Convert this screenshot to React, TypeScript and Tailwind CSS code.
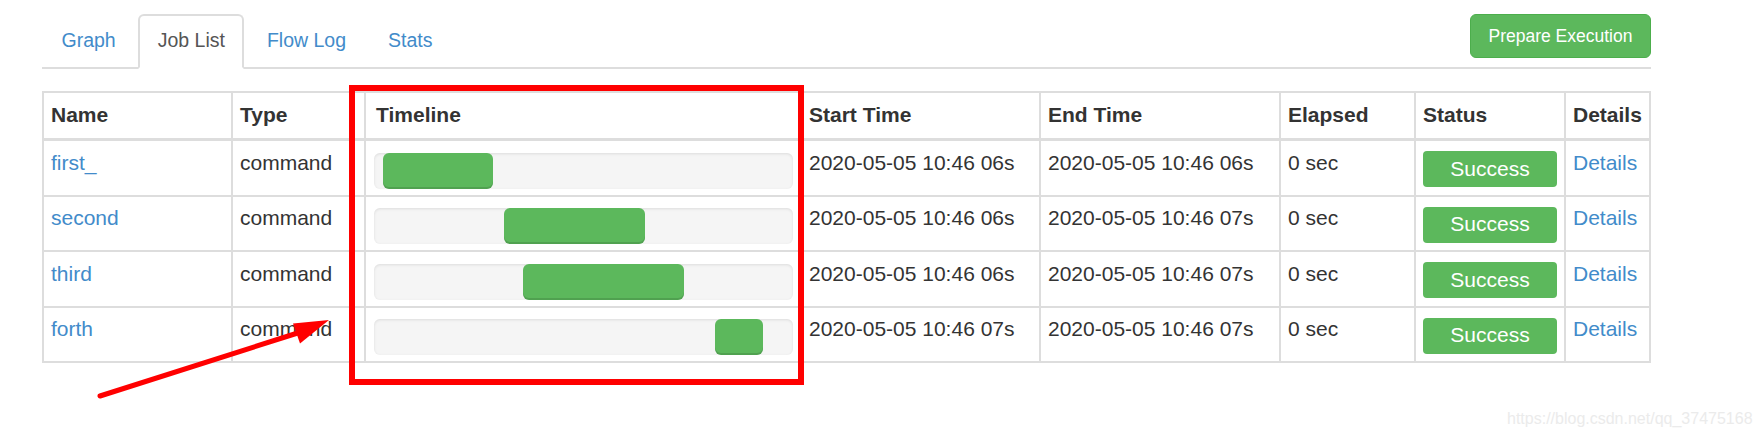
import React from "react";

type Job = {
  name: string;
  start: string;
  end: string;
  bar: string;
};

const jobs: Job[] = [
  { name: "first_", start: "2020-05-05 10:46 06s", end: "2020-05-05 10:46 06s", bar: "ml-[9px] w-[110px]" },
  { name: "second", start: "2020-05-05 10:46 06s", end: "2020-05-05 10:46 07s", bar: "ml-[130px] w-[141px]" },
  { name: "third", start: "2020-05-05 10:46 06s", end: "2020-05-05 10:46 07s", bar: "ml-[149px] w-[161px]" },
  { name: "forth", start: "2020-05-05 10:46 07s", end: "2020-05-05 10:46 07s", bar: "ml-[341px] w-[48px]" },
];

const tabs = ["Graph", "Job List", "Flow Log", "Stats"];
const headers = ["Name", "Type", "Timeline", "Start Time", "End Time", "Elapsed", "Status", "Details"];

const cell = "border-r-2 border-b-2 border-[#ddd] pl-[7px] pr-[7.5px] pt-[6.5px] leading-[30px]";

const App: React.FC = () => {
  return (
    <div className="relative w-[1759px] h-[439px] bg-white text-[#333] font-['Liberation_Sans',Arial,sans-serif] overflow-hidden">
      <div className="pl-[42px] pt-[14px] w-[1651px]">
        {/* tabs + action */}
        <div className="flex justify-between border-b-2 border-[#ddd]">
          <ul className="flex -mb-[2px]">
            {tabs.map((t) => {
              const active = t === "Job List";
              return (
                <li key={t} className="mr-[3px]">
                  <a
                    className={
                      active
                        ? "block h-[55px] px-[17.5px] pt-[10px] text-[19.5px] leading-[28px] border-2 border-[#ddd] border-b-white bg-white rounded-t-[6px] text-[#555]"
                        : "block h-[55px] px-[17.5px] pt-[10px] text-[19.5px] leading-[28px] border-2 border-transparent rounded-t-[6px] text-[#428bca]"
                    }
                  >
                    {t}
                  </a>
                </li>
              );
            })}
          </ul>
          <button className="self-start h-[44px] w-[181px] rounded-[6px] border border-[#4cae4c] bg-[#5cb85c] text-white text-[17.5px]">
            Prepare Execution
          </button>
        </div>

        {/* job table */}
        <div className="mt-[22px] grid w-[1609px] grid-cols-[189px_133px_436px_239px_240px_135px_150px_85px] border-l-2 border-t-2 border-[#ddd] text-[21px]">
          {headers.map((h) => (
            <div
              key={h}
              className={
                h === "Timeline"
                  ? "h-[48px] border-r-2 border-b-[3px] border-[#ddd] pl-[10px] pr-[7.5px] pt-[6.5px] leading-[30px] font-bold"
                  : "h-[48px] border-r-2 border-b-[3px] border-[#ddd] pl-[7px] pr-[7.5px] pt-[6.5px] leading-[30px] font-bold"
              }
            >
              {h}
            </div>
          ))}
          {jobs.map((j) => (
            <React.Fragment key={j.name}>
              <div className={`${cell} h-[55.5px] text-[#428bca]`}>{j.name}</div>
              <div className={`${cell} h-[55.5px]`}>command</div>
              <div className="h-[55.5px] border-r-2 border-b-2 border-[#ddd] px-[7.5px] pt-[11.5px]">
                <div className="flex h-[36px] rounded-[6px] bg-[#f5f5f5] shadow-[inset_0_1px_3px_rgba(0,0,0,0.1)]">
                  <div className={`${j.bar} h-full rounded-[6px] bg-[#5cb85c] shadow-[inset_0_-2px_0_rgba(0,0,0,0.12)]`} />
                </div>
              </div>
              <div className={`${cell} h-[55.5px]`}>{j.start}</div>
              <div className={`${cell} h-[55.5px]`}>{j.end}</div>
              <div className={`${cell} h-[55.5px]`}>0 sec</div>
              <div className="h-[55.5px] border-r-2 border-b-2 border-[#ddd] px-[7px] pt-[10px]">
                <div className="flex h-[36px] items-center justify-center rounded-[4px] bg-[#5cb85c] pb-[2px] text-white leading-none">
                  Success
                </div>
              </div>
              <div className={`${cell} h-[55.5px] text-[#428bca]`}>Details</div>
            </React.Fragment>
          ))}
        </div>
      </div>

      {/* annotation overlay */}
      <svg className="pointer-events-none absolute inset-0" width="1759" height="439" viewBox="0 0 1759 439">
        <rect x="352" y="88" width="449" height="294" fill="none" stroke="#ff0000" strokeWidth="6" />
        <line x1="100" y1="396" x2="304" y2="331" stroke="#ff0000" strokeWidth="5" strokeLinecap="round" />
        <polygon points="293,323.5 300,343.5 329,320" fill="#ff0000" />
      </svg>

      <div className="absolute left-[1507px] top-[409px] text-[16px] leading-[20px] text-[#ebebeb]">
        https://blog.csdn.net/qq_37475168
      </div>
    </div>
  );
};

export default App;
